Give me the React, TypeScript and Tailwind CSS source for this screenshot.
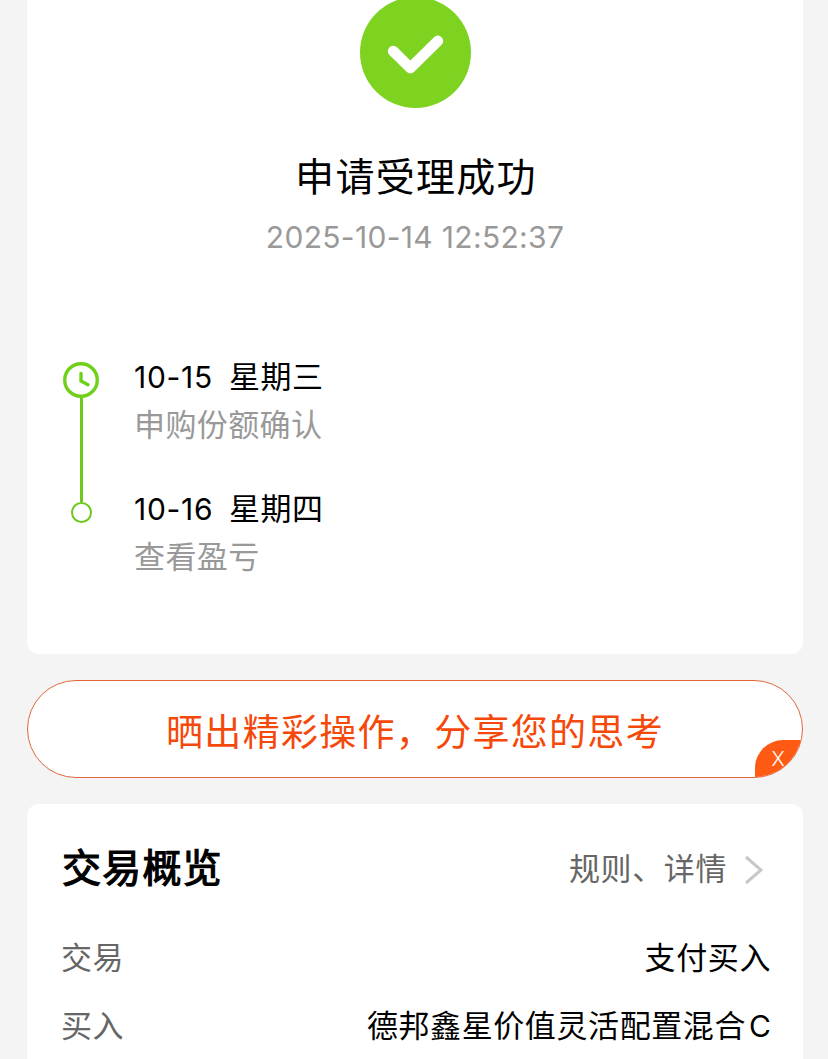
import type { ReactNode } from 'react'

interface Step {
  date: string
  weekday: string
  label: string
}

const steps: Step[] = [
  { date: '10-15', weekday: '星期三', label: '申购份额确认' },
  { date: '10-16', weekday: '星期四', label: '查看盈亏' },
]

function SuccessIcon() {
  return (
    <svg width="111" height="111" viewBox="0 0 111 111" className="block shrink-0">
      <circle cx="55.5" cy="55.5" r="55.5" fill="#7ed321" />
      <path d="M33.2 54.2 L50.4 71 L77.8 44" fill="none" stroke="#fff" strokeWidth="10.8" strokeLinecap="round" strokeLinejoin="round" />
    </svg>
  )
}

function ClockIcon() {
  return (
    <svg width="36" height="36" viewBox="0 0 36 36" className="block shrink-0">
      <circle cx="18" cy="18" r="16.3" fill="none" stroke="#6fd01a" strokeWidth="3.4" />
      <path d="M18 11.5 V19 L25 22.8" fill="none" stroke="#6fd01a" strokeWidth="3.4" strokeLinecap="round" strokeLinejoin="round" />
    </svg>
  )
}

function StepText({ date, weekday, label }: Step) {
  return (
    <div>
      <p className="h-12 text-[31px] leading-[48px] text-black whitespace-nowrap flex">
        <span className="w-[95px] text-[30px] tracking-[0.7px]">{date}</span>
        <span className="tracking-[0.5px]">{weekday}</span>
      </p>
      <p className="h-12 text-[31px] leading-[48px] tracking-[0.4px] text-[#999] whitespace-nowrap">{label}</p>
    </div>
  )
}

function Row({ label, children }: { label: string; children: ReactNode }) {
  return (
    <div className="flex h-[68px] items-center justify-between text-[31px] leading-[68px] tracking-[0.6px]">
      <span className="text-[#666]">{label}</span>
      <span className="text-black">{children}</span>
    </div>
  )
}

export default function App() {
  return (
    <div className="h-[1059px] overflow-hidden bg-[#f4f4f4] pl-[27px] pr-[25px] font-['Inter','Noto_Sans_CJK_SC',sans-serif]">
      {/* Result */}
      <section className="h-[654px] rounded-b-xl bg-white">
        <div className="flex flex-col items-center">
          <div className="-mt-[3px]">
            <SuccessIcon />
          </div>
          <h1 className="mt-[39px] h-[60px] pl-[2px] text-[39px] leading-[60px] tracking-[1.3px] text-black">申请受理成功</h1>
          <p className="mt-[6px] h-12 text-[30px] leading-[48px] tracking-[0.32px] text-[#999]">2025-10-14 12:52:37</p>
        </div>

        <div className="mt-[92px] flex pl-9">
          <div className="flex w-9 flex-col items-center pt-[9px]">
            <ClockIcon />
            <div className="h-[104px] w-[3px] bg-[#6fc81e]" />
            <div className="ml-px h-[21px] w-[21px] rounded-full border-2 border-[#6fc81e]" />
          </div>
          <div className="ml-[35px] flex flex-col gap-9">
            {steps.map(s => <StepText key={s.date} {...s} />)}
          </div>
        </div>
      </section>

      {/* Share */}
      <button className="relative mt-[26px] block h-[98px] w-full overflow-hidden rounded-full border border-[#e0673c] bg-white pt-[2px] text-center text-[37px] leading-[100px] tracking-[1.3px] text-[#f5490c]">
        晒出精彩操作，分享您的思考
        <span className="absolute -bottom-px -right-px h-[38px] w-12 rounded-tl-[28px] bg-[#ff5a13] pr-[2px] text-center text-[20px] font-light leading-[38px] tracking-normal text-white">X</span>
      </button>

      {/* Overview */}
      <section className="mt-[26px] h-[280px] rounded-t-xl bg-white pl-[34px] pr-[32px] pt-[33px]">
        <div className="flex h-[62px] items-center justify-between">
          <h2 className="pl-px text-[39px] font-normal leading-[62px] tracking-[1.2px] text-black [-webkit-text-stroke:1.2px_black]">交易概览</h2>
          <div className="flex items-center pr-[7px] pt-[2px] text-[31px] tracking-[0.6px] text-[#666]">
            规则、详情
            <svg width="20" height="32" viewBox="0 0 20 32" className="ml-[17px] mt-px">
              <path d="M2 3 L17 16 L2 29" fill="none" stroke="#c8c8c8" strokeWidth="3" />
            </svg>
          </div>
        </div>
        <div className="mt-[25px]">
          <Row label="交易">支付买入</Row>
          <Row label="买入">德邦鑫星价值灵活配置混合<span className="ml-[3px] text-[30px] tracking-normal">C</span></Row>
        </div>
      </section>
    </div>
  )
}
